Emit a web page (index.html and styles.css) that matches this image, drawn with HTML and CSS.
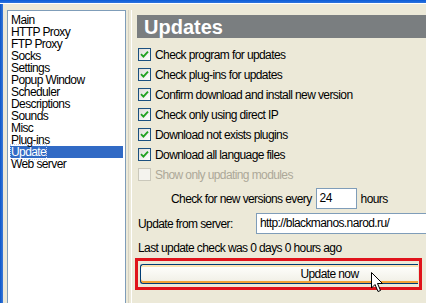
FILE: index.html
```html
<!DOCTYPE html>
<html>
<head>
<meta charset="utf-8">
<link rel="stylesheet" href="styles.css">
</head>
<body>
<div class="titlebar"></div>
<div class="window">
  <div class="frame-left"></div>
  <div class="content">
    <div class="listbox">
      <div class="item">Main</div>
      <div class="item">HTTP Proxy</div>
      <div class="item">FTP Proxy</div>
      <div class="item">Socks</div>
      <div class="item">Settings</div>
      <div class="item">Popup Window</div>
      <div class="item">Scheduler</div>
      <div class="item">Descriptions</div>
      <div class="item">Sounds</div>
      <div class="item">Misc</div>
      <div class="item">Plug-ins</div>
      <div class="item selected"><span>Update</span></div>
      <div class="item">Web server</div>
    </div>
    <div class="splitter"></div>
    <div class="panel">
      <div class="header">Updates</div>
      <div class="checks">
        <label class="check"><span class="box"><svg width="9" height="9" viewBox="0 0 9 9"><path d="M1 4.2 L3.4 6.6 L8 1.6" fill="none" stroke="#21a121" stroke-width="1.9"/></svg></span>Check program for updates</label>
        <label class="check"><span class="box"><svg width="9" height="9" viewBox="0 0 9 9"><path d="M1 4.2 L3.4 6.6 L8 1.6" fill="none" stroke="#21a121" stroke-width="1.9"/></svg></span>Check plug-ins for updates</label>
        <label class="check"><span class="box"><svg width="9" height="9" viewBox="0 0 9 9"><path d="M1 4.2 L3.4 6.6 L8 1.6" fill="none" stroke="#21a121" stroke-width="1.9"/></svg></span>Confirm download and install new version</label>
        <label class="check"><span class="box"><svg width="9" height="9" viewBox="0 0 9 9"><path d="M1 4.2 L3.4 6.6 L8 1.6" fill="none" stroke="#21a121" stroke-width="1.9"/></svg></span>Check only using direct IP</label>
        <label class="check"><span class="box"><svg width="9" height="9" viewBox="0 0 9 9"><path d="M1 4.2 L3.4 6.6 L8 1.6" fill="none" stroke="#21a121" stroke-width="1.9"/></svg></span>Download not exists plugins</label>
        <label class="check"><span class="box"><svg width="9" height="9" viewBox="0 0 9 9"><path d="M1 4.2 L3.4 6.6 L8 1.6" fill="none" stroke="#21a121" stroke-width="1.9"/></svg></span>Download all language files</label>
        <label class="check disabled"><span class="box"></span>Show only updating modules</label>
      </div>
      <div class="every">
        <span>Check for new versions every</span>
        <span class="input small">24</span>
        <span>hours</span>
      </div>
      <div class="server">
        <span class="server-label">Update from server:</span>
        <span class="input wide">http://blackmanos.narod.ru/</span>
      </div>
      <div class="last">Last update check was 0 days 0 hours ago</div>
      <div class="highlight">
        <div class="button">Update now</div>
        <svg class="cursor" width="13" height="21" viewBox="0 0 13 21"><path d="M0.5 0.5 L0.5 16 L4 12.5 L7 19.5 L9.5 18.5 L6.5 11.5 L11.5 11.5 Z" fill="#fff" stroke="#000" stroke-width="1"/></svg>
      </div>
    </div>
  </div>
</div>
</body>
</html>
```
FILE: styles.css
```css
html, body {
  margin: 0;
  padding: 0;
}
body {
  width: 426px;
  height: 303px;
  overflow: hidden;
  background: #ece9d8;
  font-family: "Liberation Sans", Arial, sans-serif;
  font-size: 12px;
  color: #000;
}
.titlebar {
  height: 3px;
  background: linear-gradient(#0a5bd8, #2c73dd);
  border-bottom: 1px solid #fff;
}
.window {
  display: flex;
  height: 299px;
}
.frame-left {
  width: 3px;
  background: linear-gradient(90deg, #0a56c9, #3b79d8);
  flex-shrink: 0;
}
.content {
  flex: 1;
  display: flex;
  padding: 6px 0 0 4px;
  background: #ece9d8;
}
.listbox {
  width: 119px;
  height: 300px;
  background: #fff;
  border: 1px solid #7f9db9;
  padding: 3px 2px 0 2px;
  box-sizing: border-box;
  flex-shrink: 0;
}
.item {
  height: 12px;
  line-height: 12px;
  padding-left: 1px;
  white-space: nowrap;
  font-size: 12px;
  letter-spacing: -0.6px;
}
.item.selected {
  background: #316ac5;
  color: #fff;
}
.item.selected span {
  outline: 1px dotted #c0d0f0;
}
.splitter {
  width: 2px;
  margin-left: 2px;
  border-left: 1px solid #d6d2c2;
  border-right: 1px solid #fff;
  flex-shrink: 0;
}
.panel {
  flex: 1;
  padding: 5px 0 0 3px;
  display: flex;
  flex-direction: column;
  min-width: 0;
  letter-spacing: -0.6px;
}
.header {
  height: 23px;
  margin-left: 2px;
  background: #7a7e80;
  color: #fff;
  font-weight: bold;
  font-size: 20px;
  line-height: 24px;
  padding-left: 7px;
  letter-spacing: 0;
}
.checks {
  display: flex;
  flex-direction: column;
  gap: 7px;
  margin-top: 10px;
  padding-left: 3px;
}
.check {
  display: flex;
  align-items: center;
  gap: 4px;
  height: 13px;
  white-space: nowrap;
}
.box {
  width: 11px;
  height: 11px;
  border: 1px solid #1c5180;
  background: linear-gradient(135deg, #dcdcd7, #ffffff);
  display: flex;
  align-items: center;
  justify-content: center;
  flex-shrink: 0;
}
.check.disabled {
  color: #aca899;
}
.check.disabled .box {
  border-color: #cac8bb;
  background: #f4f3ee;
}
.every {
  display: flex;
  align-items: center;
  margin-top: 7px;
  padding-left: 36px;
  gap: 4px;
  height: 21px;
  white-space: nowrap;
}
.input {
  background: #fff;
  border: 1px solid #7f9db9;
  line-height: 19px;
  padding-left: 3px;
  box-sizing: border-box;
  height: 21px;
  white-space: nowrap;
  overflow: hidden;
}
.input.small {
  width: 41px;
}
.server {
  display: flex;
  align-items: center;
  margin-top: 4px;
  padding-left: 3px;
  height: 21px;
  white-space: nowrap;
}
.server-label {
  width: 118px;
  flex-shrink: 0;
}
.input.wide {
  flex: 1;
  border-right: none;
}
.last {
  margin-top: 7px;
  padding-left: 3px;
  height: 14px;
  line-height: 14px;
  white-space: nowrap;
}
.highlight {
  position: relative;
  margin-top: 3px;
  margin-right: 4px;
  border: 3px solid #e0131b;
  padding: 3px 1px 3px 2px;
}
.button {
  height: 20px;
  box-sizing: border-box;
  border: 1px solid #003c74;
  border-right: none;
  border-radius: 3px 0 0 3px;
  background: linear-gradient(#fffffd, #f3f2ea 80%, #e8e6da);
  box-shadow: inset 0 -2px 0 #f2a337, inset 0 2px 0 #fde2b2;
  text-align: center;
  padding-left: 100px;
  line-height: 18px;
}
.cursor {
  position: absolute;
  left: 233px;
  top: 11px;
}
```
